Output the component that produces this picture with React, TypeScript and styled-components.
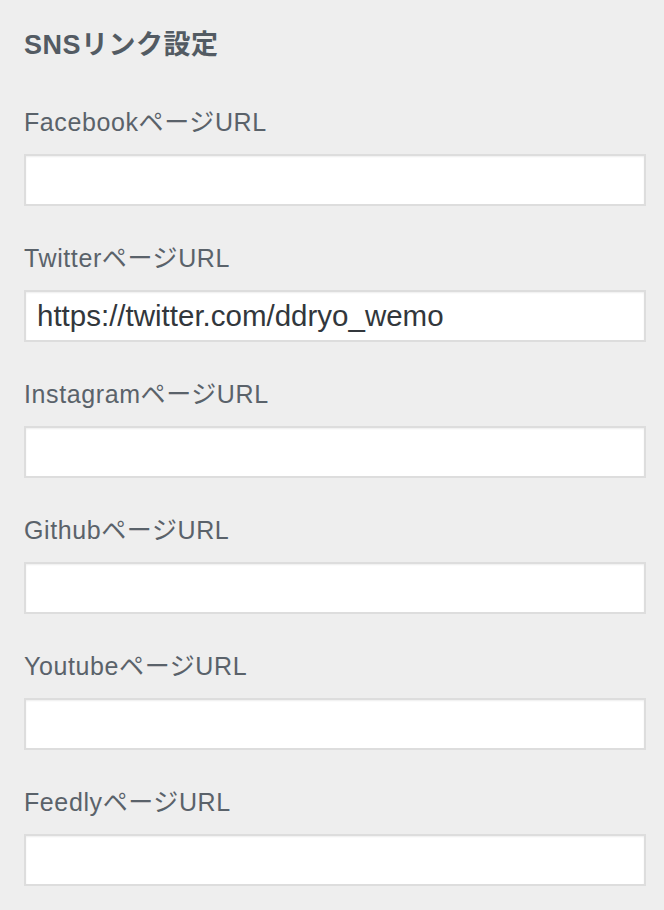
import styled, { createGlobalStyle } from 'styled-components';

const fields = [
  { name: 'Facebook', value: '' },
  { name: 'Twitter', value: 'https://twitter.com/ddryo_wemo' },
  { name: 'Instagram', value: '' },
  { name: 'Github', value: '' },
  { name: 'Youtube', value: '' },
  { name: 'Feedly', value: '' },
];

const GlobalStyle = createGlobalStyle`
  html, body {
    margin: 0;
    padding: 0;
    background: #eeeeee;
  }
  body {
    font-family: "Liberation Sans", "Noto Sans CJK JP", sans-serif;
  }
`;

const App = () => (
  <>
    <GlobalStyle />
    <Panel>
      <Heading>SNSリンク設定</Heading>
      {fields.map((field) => (
        <Field key={field.name}>
          <Label htmlFor={`sns-${field.name}`}>{field.name}ページURL</Label>
          <Input id={`sns-${field.name}`} type="text" defaultValue={field.value} />
        </Field>
      ))}
    </Panel>
  </>
);

const Panel = styled.div`
  padding: 27px 18px 24px 24px;
  display: flex;
  flex-direction: column;
`;

const Heading = styled.h2`
  margin: 0 0 41px;
  font-size: 27px;
  line-height: 36px;
  font-weight: 700;
  letter-spacing: 0.5px;
  color: #535b63;
`;

const Field = styled.div`
  display: flex;
  flex-direction: column;
  margin-bottom: 34px;
`;

const Label = styled.label`
  font-size: 25px;
  line-height: 36px;
  letter-spacing: 0.6px;
  color: #5a626a;
  margin-bottom: 14px;
`;

const Input = styled.input`
  box-sizing: border-box;
  width: 100%;
  height: 52px;
  margin: 0;
  padding: 0 11px;
  border: 2px solid #dddddd;
  border-radius: 0;
  background: #ffffff;
  box-shadow: inset 0 1px 2px rgba(0, 0, 0, 0.07);
  font-family: "Liberation Sans", "Noto Sans CJK JP", sans-serif;
  font-size: 29.5px;
  color: #32373c;
  outline: none;
`;

export default App;
